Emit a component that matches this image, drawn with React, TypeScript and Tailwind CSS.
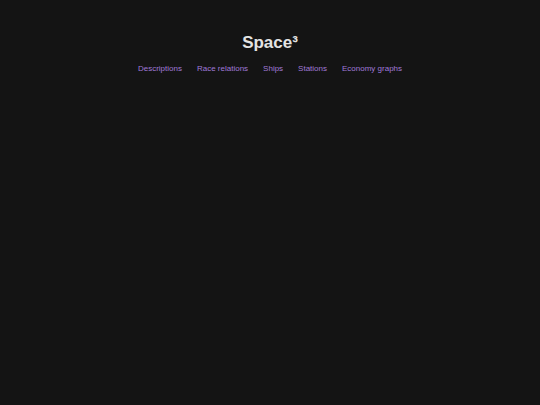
export default function App() {
  const links = ["Descriptions", "Race relations", "Ships", "Stations", "Economy graphs"];
  return (
    <div className="min-h-screen bg-[#141414] font-['Liberation_Sans',Arial,sans-serif]">
      <div className="flex flex-col items-center pt-[33px]">
        <h1 className="text-[17px] font-bold leading-[20px] text-[#e4e4e4]">Space³</h1>
        <nav className="mt-[11px] flex gap-[15px] text-[8px] leading-[10px]">
          {links.map((l) => (
            <a key={l} href="#" className="text-[#a07ad8]">
              {l}
            </a>
          ))}
        </nav>
      </div>
    </div>
  );
}
